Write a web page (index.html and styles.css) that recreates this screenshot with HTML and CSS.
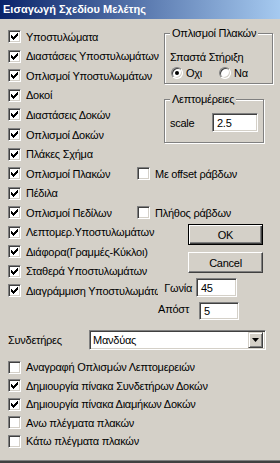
FILE: index.html
```html
<!DOCTYPE html>
<html lang="el">
<head>
    <meta charset="UTF-8">
    <title>Εισαγωγή Σχεδίου Μελέτης</title>
    <link rel="stylesheet" href="styles.css">
</head>
<body>
    <svg class="defs" width="0" height="0">
        <symbol id="tick" viewBox="0 0 7 7">
            <path d="M0 2h1v3H0zM1 3h1v3H1zM2 4h1v3H2zM3 3h1v3H3zM4 2h1v3H4zM5 1h1v3H5zM6 0h1v3H6z" fill="#000" />
        </symbol>
    </svg>

    <div class="dialog">
        <div class="titlebar">Εισαγωγή Σχεδίου Μελέτης</div>

        <div class="client">
            <div class="top">
                <div class="checks">
                    <label class="chk"><span class="box"><svg><use href="#tick" /></svg></span>Υποστυλώματα</label>
                    <label class="chk"><span class="box"><svg><use href="#tick" /></svg></span>Διαστάσεις Υποστυλωμάτων</label>
                    <label class="chk"><span class="box"><svg><use href="#tick" /></svg></span>Οπλισμοί Υποστυλωμάτων</label>
                    <label class="chk"><span class="box"><svg><use href="#tick" /></svg></span>Δοκοί</label>
                    <label class="chk"><span class="box"><svg><use href="#tick" /></svg></span>Διαστάσεις Δοκών</label>
                    <label class="chk"><span class="box"><svg><use href="#tick" /></svg></span>Οπλισμοί Δοκών</label>
                    <label class="chk"><span class="box"><svg><use href="#tick" /></svg></span>Πλάκες Σχήμα</label>
                    <div class="pair">
                        <label class="chk first"><span class="box"><svg><use href="#tick" /></svg></span>Οπλισμοί Πλακών</label>
                        <label class="chk"><span class="box"></span>Με offset ράβδων</label>
                    </div>
                    <label class="chk"><span class="box"><svg><use href="#tick" /></svg></span>Πέδιλα</label>
                    <div class="pair">
                        <label class="chk first"><span class="box"><svg><use href="#tick" /></svg></span>Οπλισμοί Πεδίλων</label>
                        <label class="chk"><span class="box"></span>Πλήθος ράβδων</label>
                    </div>
                    <label class="chk"><span class="box"><svg><use href="#tick" /></svg></span>Λεπτομερ.Υποστυλωμάτων</label>
                    <label class="chk"><span class="box"><svg><use href="#tick" /></svg></span>Διάφορα(Γραμμές-Κύκλοι)</label>
                    <label class="chk"><span class="box"><svg><use href="#tick" /></svg></span>Σταθερά Υποστυλωμάτων</label>
                    <label class="chk clip"><span class="box"><svg><use href="#tick" /></svg></span>Διαγράμμιση Υποστυλωμάτων</label>
                </div>

                <div class="side">
                    <fieldset class="group slabs">
                        <legend>Οπλισμοί Πλακών</legend>
                        <div class="caption">Σπαστά Στήριξη</div>
                        <div class="radios">
                            <label class="radio"><span class="dot on"></span>Οχι</label>
                            <label class="radio"><span class="dot"></span>Να</label>
                        </div>
                    </fieldset>

                    <fieldset class="group details">
                        <legend>Λεπτομέρειες</legend>
                        <div class="field">
                            <span class="name">scale</span>
                            <span class="edit scale">2.5</span>
                        </div>
                    </fieldset>

                    <div class="button default">OK</div>
                    <div class="button cancel">Cancel</div>

                    <div class="param angle">
                        <span class="name">Γωνία</span>
                        <span class="edit">45</span>
                    </div>
                    <div class="param dist">
                        <span class="name">Απόστ</span>
                        <span class="edit">5</span>
                    </div>
                </div>
            </div>

            <div class="combo-row">
                <span class="name">Συνδετήρες</span>
                <div class="combo">
                    <span class="value">Μανδύας</span>
                    <span class="drop"><svg width="7" height="4" viewBox="0 0 7 4"><path d="M0 0h7L3.5 4z" fill="#000" /></svg></span>
                </div>
            </div>

            <div class="lower">
                <label class="chk"><span class="box"></span>Αναγραφή Οπλισμών Λεπτομερειών</label>
                <label class="chk"><span class="box"><svg><use href="#tick" /></svg></span>Δημιουργία πίνακα Συνδετήρων Δοκών</label>
                <label class="chk"><span class="box"><svg><use href="#tick" /></svg></span>Δημιουργία πίνακα Διαμήκων Δοκών</label>
                <label class="chk"><span class="box"></span>Ανω πλέγματα πλακών</label>
                <label class="chk"><span class="box"></span>Κάτω πλέγματα πλακών</label>
            </div>
        </div>
    </div>
</body>
</html>
```

FILE: styles.css
```css
/* classic dialog */

html,
body {
    margin: 0;
    padding: 0;
}

body {
    width: 280px;
    height: 463px;
    overflow: hidden;
    background: #D4D0C8;
    font: 11px "Liberation Sans", "DejaVu Sans", sans-serif;
    color: #000;
}

.defs {
    position: absolute;
    width: 0;
    height: 0;
}

.dialog {
    box-sizing: border-box;
    height: 463px;
    background: #D4D0C8;
    border-bottom: 2px solid #404040;
    box-shadow: inset 0 -1px 0 #808080;
}

.titlebar {
    height: 19px;
    line-height: 19px;
    padding-left: 3px;
    color: #FFF;
    font-weight: bold;
    font-size: 11px;
    background: linear-gradient(to right, #0A246A, #A6CAF0);
    white-space: nowrap;
}

.client {
    letter-spacing: -0.25px;
}

.top {
    display: grid;
    grid-template-columns: 158px 122px;
}

/* checkboxes */

.checks {
    padding-top: 8px;
}

.chk {
    display: flex;
    align-items: center;
    height: 19.55px;
    white-space: nowrap;
}

.checks .chk,
.pair {
    padding-left: 8px;
}

.pair {
    display: flex;
    height: 19.55px;
}

.pair .chk {
    padding-left: 0;
}

.pair .first {
    flex: none;
    width: 129px;
}

.chk.clip {
    width: 150px;
    overflow: hidden;
}

.box {
    box-sizing: border-box;
    flex: none;
    width: 13px;
    height: 13px;
    margin-right: 5px;
    padding: 2px;
    background: #FFF;
    border: 1px solid;
    border-color: #808080 #FFF #FFF #808080;
    box-shadow: inset 1px 1px 0 #404040, inset -1px -1px 0 #D4D0C8;
}

.box svg {
    display: block;
    width: 7px;
    height: 7px;
}

/* right column */

.group {
    margin: 0;
    padding: 11px 5px 3px 5px;
    border: 1px solid #808080;
    box-shadow: 1px 1px 0 #FFF, inset 1px 1px 0 #FFF;
}

.group legend {
    padding: 0 2px;
    line-height: 13px;
    background: #D4D0C8;
}

.slabs {
    margin: 7.5px 0 0 6px;
    width: 102px;
    box-sizing: border-box;
}

.caption {
    line-height: 13px;
}

.radios {
    display: flex;
    margin-top: 3px;
    padding-left: 1px;
    height: 13px;
}

.radio {
    display: flex;
    align-items: center;
    width: 48px;
}

.dot {
    box-sizing: border-box;
    width: 12px;
    height: 12px;
    margin-right: 3px;
    border-radius: 50%;
    background: #FFF;
    border: 1px solid;
    border-color: #808080 #FFF #FFF #808080;
    box-shadow: inset 1px 1px 0 #404040, inset -1px -1px 0 #D4D0C8;
    display: flex;
    align-items: center;
    justify-content: center;
}

.dot.on::after {
    content: "";
    width: 4px;
    height: 4px;
    border-radius: 50%;
    background: #000;
}

.details {
    margin: 9px 0 0 6px;
    width: 99px;
    box-sizing: border-box;
    padding: 7.5px 5px 9.5px 5px;
}

.field {
    display: flex;
    align-items: center;
}

.field .name {
    width: 42px;
}

.edit {
    box-sizing: border-box;
    display: flex;
    align-items: center;
    height: 19px;
    padding-left: 4px;
    background: #FFF;
    border: 1px solid;
    border-color: #808080 #FFF #FFF #808080;
    box-shadow: inset 1px 1px 0 #404040, inset -1px -1px 0 #D4D0C8;
}

.edit.scale {
    width: 46px;
}

.button {
    box-sizing: border-box;
    width: 75px;
    height: 21px;
    margin-left: 30px;
    display: flex;
    align-items: center;
    justify-content: center;
    border: 1px solid;
    border-color: #FFF #404040 #404040 #FFF;
    box-shadow: inset -1px -1px 0 #808080, inset 1px 1px 0 #D4D0C8;
}

.button.default {
    margin-top: 81.5px;
    border: 1px solid #000;
    box-shadow: inset 1px 1px 0 #FFF, inset -1px -1px 0 #404040, inset -2px -2px 0 #808080;
}

.button.cancel {
    margin-top: 7px;
}

.param {
    display: flex;
    align-items: center;
}

.param .name {
    text-align: right;
}

.angle {
    margin-top: 5px;
}

.angle .name {
    width: 34px;
    margin-right: 4px;
}

.angle .edit {
    width: 41px;
}

.dist {
    margin-top: 5px;
    align-items: flex-start;
}

.dist .name {
    width: 31px;
    margin-right: 10px;
    margin-top: 1px;
}

.dist .edit {
    width: 40px;
    height: 18px;
}

/* combo */

.combo-row {
    display: flex;
    align-items: center;
    margin-top: 10px;
    padding-left: 8px;
}

.combo-row .name {
    width: 81px;
}

.combo {
    box-sizing: border-box;
    display: flex;
    align-items: center;
    width: 177px;
    height: 20px;
    padding: 2px 2px 2px 3px;
    background: #FFF;
    border: 1px solid;
    border-color: #808080 #FFF #FFF #808080;
    box-shadow: inset 1px 1px 0 #404040, inset -1px -1px 0 #D4D0C8;
}

.combo .value {
    flex: 1;
}

.drop {
    box-sizing: border-box;
    width: 15px;
    height: 16px;
    background: #D4D0C8;
    display: flex;
    align-items: center;
    justify-content: center;
    border: 1px solid;
    border-color: #D4D0C8 #404040 #404040 #D4D0C8;
    box-shadow: inset 1px 1px 0 #FFF, inset -1px -1px 0 #808080;
}

.drop svg {
    display: block;
}

/* lower checkboxes */

.lower {
    display: flex;
    flex-direction: column;
    gap: 5.5px;
    padding: 10.5px 0 0 8px;
}

.lower .chk {
    height: 13px;
}
```
